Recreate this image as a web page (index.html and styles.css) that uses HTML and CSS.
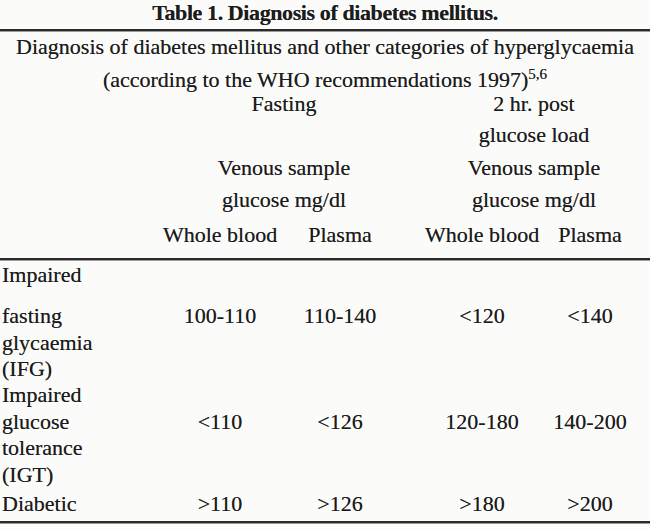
FILE: index.html
```html
<!DOCTYPE html>
<html>
<head>
<meta charset="utf-8">
<link rel="stylesheet" href="styles.css">
</head>
<body>
<div class="page">
  <div class="title">Table 1. Diagnosis of diabetes mellitus.</div>
  <div class="rule rule-top"></div>
  <div class="caption caption-1">Diagnosis of diabetes mellitus and other categories of hyperglycaemia</div>
  <div class="caption caption-2">(according to the WHO recommendations 1997)<sup>5,6</sup></div>

  <div class="head">
    <div class="h-fast r1">Fasting</div>
    <div class="h-post r1">2 hr. post</div>
    <div class="h-post r2">glucose load</div>
    <div class="h-fast r3">Venous sample</div>
    <div class="h-post r3">Venous sample</div>
    <div class="h-fast r4">glucose mg/dl</div>
    <div class="h-post r4">glucose mg/dl</div>
    <div class="c-b r5">Whole blood</div>
    <div class="c-c r5">Plasma</div>
    <div class="c-e r5">Whole blood</div>
    <div class="c-f r5">Plasma</div>
  </div>

  <div class="rule rule-mid"></div>

  <div class="row row-a">
    <div class="label">Impaired</div>
  </div>
  <div class="row row-b">
    <div class="label">fasting<br>glycaemia<br>(IFG)</div>
    <div class="cell c-b">100-110</div>
    <div class="cell c-c">110-140</div>
    <div class="cell c-e">&lt;120</div>
    <div class="cell c-f">&lt;140</div>
  </div>
  <div class="row row-c">
    <div class="label">Impaired<br>glucose<br>tolerance<br>(IGT)</div>
    <div class="cell c-b second">&lt;110</div>
    <div class="cell c-c second">&lt;126</div>
    <div class="cell c-e second">120-180</div>
    <div class="cell c-f second">140-200</div>
  </div>
  <div class="row row-d">
    <div class="label">Diabetic</div>
    <div class="cell c-b">&gt;110</div>
    <div class="cell c-c">&gt;126</div>
    <div class="cell c-e">&gt;180</div>
    <div class="cell c-f">&gt;200</div>
  </div>

  <div class="rule rule-bottom"></div>
</div>
</body>
</html>
```

FILE: styles.css
```css
html, body {
  margin: 0;
  padding: 0;
  background: #fbfbfa;
}

.page {
  width: 650px;
  height: 530px;
  font-family: "Liberation Serif", "Times New Roman", serif;
  font-size: 22px;
  color: #1c1c1c;
  line-height: 26px;
  white-space: nowrap;
  text-shadow: 0 0 0.6px rgba(0, 0, 0, 0.6);
}

.title {
  text-align: center;
  font-weight: bold;
  font-size: 22px;
  height: 26px;
  line-height: 26px;
  letter-spacing: -0.4px;
}

.rule {
  height: 2px;
  background: #2a2a2a;
  border-bottom: 1px solid #9a9a9a;
}

.rule-top {
  margin-top: 3px;
}

.caption {
  text-align: center;
}

.caption-1 {
  margin-top: 2px;
  line-height: 26px;
}

.caption-2 {
  margin-top: 9px;
  line-height: 22px;
}

.caption-2 sup {
  font-size: 15px;
  line-height: 0;
  vertical-align: 8px;
}

.head,
.row {
  display: grid;
  grid-template-columns: 164px 112px 128px 22px 112px 104px;
}

.head {
  grid-template-rows: 31px 33px 32px 35px 36px;
}

.h-fast { grid-column: 2 / 4; text-align: center; }
.h-post { grid-column: 5 / 7; text-align: center; }

.r1 { grid-row: 1; }
.r2 { grid-row: 2; }
.r3 { grid-row: 3; }
.r4 { grid-row: 4; }
.r5 { grid-row: 5; }

.c-b { grid-column: 2; text-align: center; }
.c-c { grid-column: 3; text-align: center; }
.c-e { grid-column: 5; text-align: center; }
.c-f { grid-column: 6; text-align: center; }

.r5.c-b,
.r5.c-e {
  display: flex;
  justify-content: center;
}

.label {
  grid-column: 1;
  padding-left: 2px;
  line-height: 26.6px;
}

.cell {
  line-height: 26.6px;
}

.cell.second {
  padding-top: 26.6px;
}

.row-a {
  margin-top: 1px;
  height: 41px;
}

.row-b {
  height: 79px;
}

.row-c {
  height: 109px;
}

.row-d {
  height: 27px;
}

.rule-bottom {
  margin-top: 3px;
}
```
